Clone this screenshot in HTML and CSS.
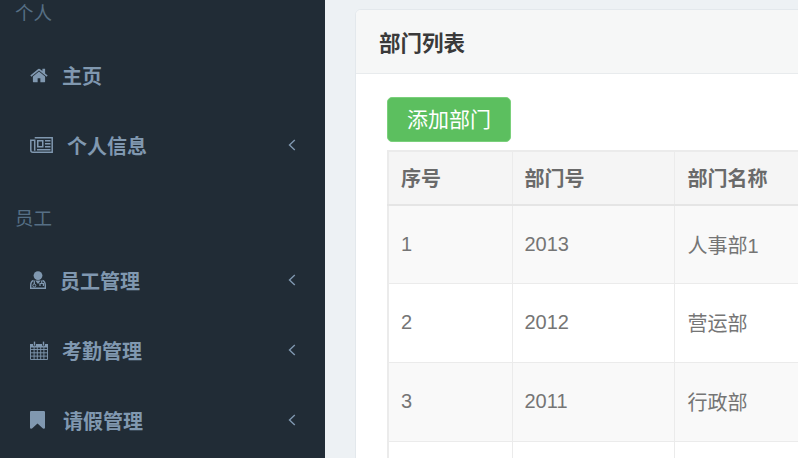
FILE: index.html
```html
<!DOCTYPE html>
<html lang="zh-CN">
<head>
<meta charset="utf-8">
<title>部门列表</title>
<link rel="stylesheet" href="styles.css">
</head>
<body>
<div class="app">
  <aside class="sidebar">
    <div class="section first">个人</div>
    <a class="item">
      <svg class="icon i-home" viewBox="0 0 1664 1792"><path fill="currentColor" d="M1408 992v480q0 26-19 45t-45 19h-384v-384h-256v384h-384q-26 0-45-19t-19-45v-480q0-1 .5-3t.5-3l575-474 575 474q1 2 1 6zm223-69l-62 74q-8 9-21 11h-3q-13 0-21-7l-692-577-692 577q-12 8-24 7-13-2-21-11l-62-74q-8-10-7-23.500t11-21.500l719-599q32-26 76-26t76 26l244 204v-195q0-14 9-23t23-9h192q14 0 23 9t9 23v408l219 182q10 8 11 21.500t-7 23.500z"/></svg>
      <span class="label">主页</span>
    </a>
    <a class="item">
      <svg class="icon i-news" viewBox="0 0 23 16"><path fill="none" stroke="currentColor" stroke-width="1.500" d="M4.700.8h17.500v14.400H2.800Q.8 15.200.8 13.200V3.200h3.900v10.500"/><path fill="currentColor" d="M7 3h6.500v7.500H7zM15 3h5.500v1.500H15zM15 6h5.500v1.500H15zM15 9h5.500v1.500H15zM7 12h13.500v1.500H7z"/><path fill="#212c36" d="M8.500 4.500h3.500v4.500H8.500z"/></svg>
      <span class="label">个人信息</span>
      <svg class="chev" viewBox="0 0 8 12"><path d="M6.800 1 1.500 6l5.300 5" fill="none" stroke="currentColor" stroke-width="1.400"/></svg>
    </a>
    <div class="section">员工</div>
    <a class="item">
      <svg class="icon i-user" viewBox="0 0 16 18"><circle cx="8" cy="4.600" r="4.400" fill="currentColor"/><path fill="none" stroke="currentColor" stroke-width="1.400" d="M3.500 9.500Q.7 10.500.7 14.500v2.800h14.600v-2.800q0-4-2.800-5"/><path fill="currentColor" d="M5.200 9.500h5.600L8 13z"/><circle cx="4.300" cy="14.500" r="1.500" fill="none" stroke="currentColor"/><path fill="none" stroke="currentColor" stroke-width="1.200" d="M4.300 13V9.500M11.700 9.500v2.500M10 15v-2.500h3.400V15"/></svg>
      <span class="label">员工管理</span>
      <svg class="chev" viewBox="0 0 8 12"><path d="M6.800 1 1.500 6l5.300 5" fill="none" stroke="currentColor" stroke-width="1.400"/></svg>
    </a>
    <a class="item">
      <svg class="icon i-cal" viewBox="0 0 18 19"><path fill="none" stroke="currentColor" stroke-width=".9" d="M.5 3.500h17v15H.5zM.5 8.500h17M.5 11.800h17M.5 15.100h17M4.100 6v12.500M7.300 6v12.500M10.700 6v12.500M13.900 6v12.500"/><path fill="currentColor" d="M0 3h18v3.500H0z"/><rect x="3" y=".2" width="3" height="5" rx="1.500" fill="#212c36"/><rect x="12" y=".2" width="3" height="5" rx="1.500" fill="#212c36"/><rect x="3.800" y=".6" width="1.400" height="4" fill="currentColor"/><rect x="12.800" y=".6" width="1.400" height="4" fill="currentColor"/></svg>
      <span class="label">考勤管理</span>
      <svg class="chev" viewBox="0 0 8 12"><path d="M6.800 1 1.500 6l5.300 5" fill="none" stroke="currentColor" stroke-width="1.400"/></svg>
    </a>
    <a class="item">
      <svg class="icon i-mark" viewBox="0 128 1280 1536" preserveAspectRatio="none"><path fill="currentColor" d="M1164 128q23 0 44 9 33 13 52.500 41t19.500 62v1289q0 34-19.500 62t-52.500 41q-19 8-44 8-48 0-83-32l-441-424-441 424q-36 33-83 33-23 0-44-9-33-13-52.500-41t-19.500-62v-1289q0-34 19.500-62t52.500-41q21-9 44-9h1048z"/></svg>
      <span class="label">请假管理</span>
      <svg class="chev" viewBox="0 0 8 12"><path d="M6.800 1 1.500 6l5.300 5" fill="none" stroke="currentColor" stroke-width="1.400"/></svg>
    </a>
  </aside>
  <main class="main">
    <section class="card">
      <header class="card-head">部门列表</header>
      <div class="card-body">
        <button class="btn" type="button">添加部门</button>
        <table class="table">
          <thead>
            <tr><th class="c1">序号</th><th class="c2">部门号</th><th class="c3">部门名称</th></tr>
          </thead>
          <tbody>
            <tr><td>1</td><td>2013</td><td>人事部1</td></tr>
            <tr><td>2</td><td>2012</td><td>营运部</td></tr>
            <tr><td>3</td><td>2011</td><td>行政部</td></tr>
            <tr><td></td><td></td><td></td></tr>
          </tbody>
        </table>
      </div>
    </section>
  </main>
</div>
</body>
</html>
```
FILE: styles.css
```css
* { box-sizing: border-box; }
html, body { margin: 0; height: 100%; overflow: hidden; }
body {
  font-family: "Liberation Sans", "Noto Sans CJK SC", sans-serif;
  background: #edf1f4;
}
.app { display: flex; width: 798px; height: 458px; overflow: hidden; }

.sidebar {
  flex: 0 0 325px;
  background: #212c36;
  color: #8098b0;
  height: 458px;
  overflow: hidden;
}
.section {
  height: 65px;
  padding: 26px 0 0 15px;
  font-size: 18.500px;
  line-height: 24px;
  color: #566f85;
}
.section.first { height: 41px; padding-top: 2px; }
.item {
  display: flex;
  align-items: center;
  height: 70px;
  padding: 0 30px 2px;
  gap: 14px;
  font-size: 20px;
  font-weight: 700;
}
.icon { flex: none; display: block; }
.i-home { width: 18px; height: 19px; }
.i-news { width: 23px; height: 16px; }
.i-user { width: 16px; height: 18px; }
.i-cal { width: 18px; height: 19px; }
.i-mark { width: 15px; height: 18px; margin-right: 4px; }
.label { flex: 1; }
.chev { flex: none; width: 8px; height: 12px; margin-right: -1px; }

.main { flex: 1; min-width: 0; padding: 9px 0 0 30px; overflow: hidden; }
.card {
  width: 600px;
  background: #fff;
  border: 1px solid #e3e8ec;
  border-radius: 6px 0 0 0;
}
.card-head {
  height: 64px;
  padding-left: 23px;
  font-size: 21.500px;
  font-weight: 700;
  line-height: 68px;
  color: #3a3a3a;
  background: #f6f7f7;
  border-bottom: 1px solid #e8ebed;
  border-radius: 5px 0 0 0;
}
.card-body { padding: 23px 0 0 31px; }
.btn {
  display: block;
  width: 124px;
  height: 45px;
  padding: 0 0 4px;
  border: 1px solid #7ad07b;
  border-radius: 5px;
  background: #5cbf5f;
  color: #fff;
  font: 21px "Liberation Sans", "Noto Sans CJK SC", sans-serif;
}
.table {
  margin-top: 8px;
  width: 560px;
  border-collapse: collapse;
  table-layout: fixed;
  font-size: 20px;
  color: #757575;
  text-align: left;
  border: 2px solid #ebebeb;
}
.c1 { width: 124px; }
.c2 { width: 162px; }
th, td { border: 1.500px solid #ebebeb; padding: 0 0 0 12px; font-weight: 400; }
th:nth-child(3), td:nth-child(3) { padding-left: 13px; }
th {
  height: 54px;
  padding-bottom: 2px;
  font-weight: 700;
  color: #6a6a6a;
  background: #f5f5f5;
  border-bottom: 2px solid #e5e5e5;
}
td { height: 78.800px; padding-bottom: 1px; vertical-align: middle; }
tbody tr:nth-child(odd) td { background: #f9f9f9; }
tbody tr:nth-child(even) td { background: #fff; }
```
